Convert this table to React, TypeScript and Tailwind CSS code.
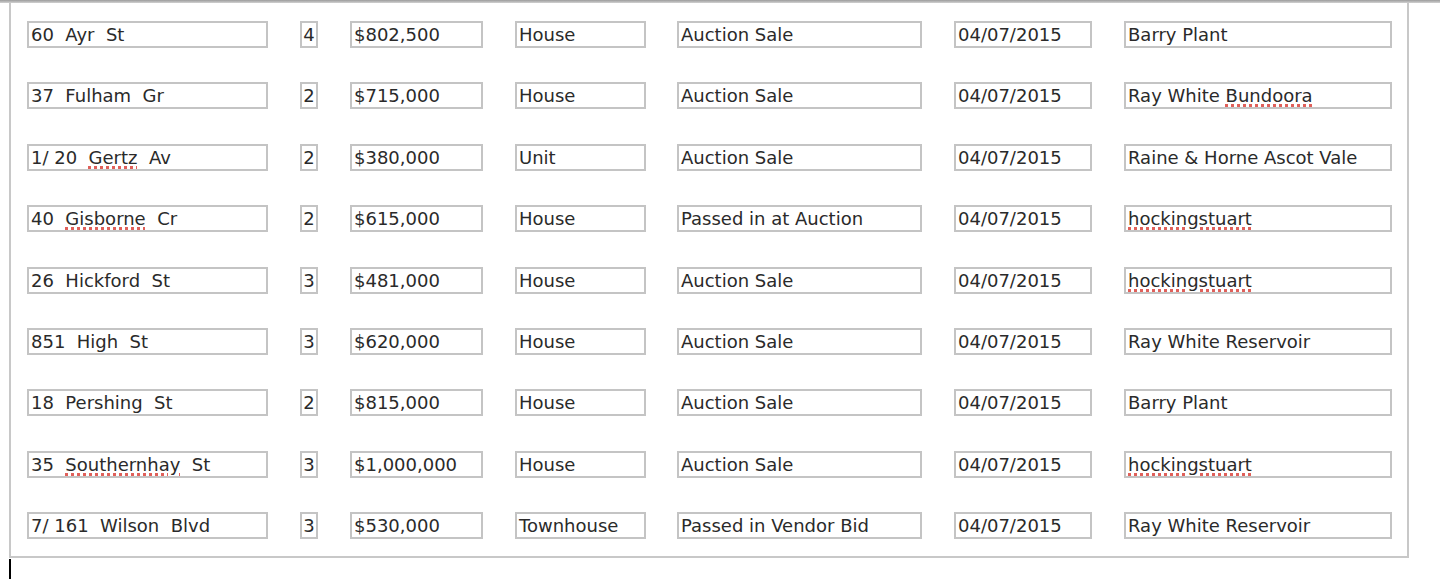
import { FC } from 'react';

type Sale = {
  address: string;
  beds: string;
  price: string;
  type: string;
  result: string;
  date: string;
  agent: string;
};

const sales: Sale[] = [
  { address: '60  Ayr  St', beds: '4', price: '$802,500', type: 'House', result: 'Auction Sale', date: '04/07/2015', agent: 'Barry Plant' },
  { address: '37  Fulham  Gr', beds: '2', price: '$715,000', type: 'House', result: 'Auction Sale', date: '04/07/2015', agent: 'Ray White *Bundoora' },
  { address: '1/ 20  *Gertz  Av', beds: '2', price: '$380,000', type: 'Unit', result: 'Auction Sale', date: '04/07/2015', agent: 'Raine & Horne Ascot Vale' },
  { address: '40  *Gisborne  Cr', beds: '2', price: '$615,000', type: 'House', result: 'Passed in at Auction', date: '04/07/2015', agent: '*hockingstuart' },
  { address: '26  Hickford  St', beds: '3', price: '$481,000', type: 'House', result: 'Auction Sale', date: '04/07/2015', agent: '*hockingstuart' },
  { address: '851  High  St', beds: '3', price: '$620,000', type: 'House', result: 'Auction Sale', date: '04/07/2015', agent: 'Ray White Reservoir' },
  { address: '18  Pershing  St', beds: '2', price: '$815,000', type: 'House', result: 'Auction Sale', date: '04/07/2015', agent: 'Barry Plant' },
  { address: '35  *Southernhay  St', beds: '3', price: '$1,000,000', type: 'House', result: 'Auction Sale', date: '04/07/2015', agent: '*hockingstuart' },
  { address: '7/ 161  Wilson  Blvd', beds: '3', price: '$530,000', type: 'Townhouse', result: 'Passed in Vendor Bid', date: '04/07/2015', agent: 'Ray White Reservoir' },
];

// words starting with * get the spell-check squiggle
const Spelled: FC<{ text: string }> = ({ text }) => {
  const parts = text.split(/(\*\S+)/);
  return (
    <>
      {parts.map((p, i) =>
        p.startsWith('*') ? (
          <span
            key={i}
            className="underline decoration-dotted decoration-[#e0605a] decoration-[3px] underline-offset-[2px]"
          >
            {p.slice(1)}
          </span>
        ) : (
          <span key={i}>{p}</span>
        ),
      )}
    </>
  );
};

const Field: FC<{ text: string; className: string }> = ({ text, className }) => (
  <div
    className={`h-[27px] shrink-0 overflow-hidden whitespace-pre border-2 border-[#c4c4c4] bg-white pl-[2px] text-[18px] leading-[24px] text-[#2a2a2a] ${className}`}
  >
    <Spelled text={text} />
  </div>
);

const App: FC = () => {
  return (
    <div className="h-[585px] w-[1440px] bg-white font-['DejaVu_Sans',Verdana,sans-serif]">
      <div className="h-[3px] w-full bg-gradient-to-b from-[#9c9c9c] to-[#d2d2d2]" />
      <div className="ml-[9px] flex h-[555px] w-[1400px] flex-col gap-[34.4px] border-x-2 border-b-2 border-[#c8c8c8] pl-[16px] pt-[18px]">
        {sales.map((s) => (
          <div key={s.address} className="flex">
            <Field text={s.address} className="w-[241px]" />
            <Field text={s.beds} className="ml-[32px] w-[18px] !pl-0 text-center" />
            <Field text={s.price} className="ml-[32px] w-[133px]" />
            <Field text={s.type} className="ml-[32px] w-[131px]" />
            <Field text={s.result} className="ml-[31px] w-[245px]" />
            <Field text={s.date} className="ml-[32px] w-[138px]" />
            <Field text={s.agent} className="ml-[32px] w-[268px]" />
          </div>
        ))}
      </div>
      <div className="ml-[9px] mt-[1px] h-[20px] w-[2px] bg-black" />
    </div>
  );
};

export default App;
